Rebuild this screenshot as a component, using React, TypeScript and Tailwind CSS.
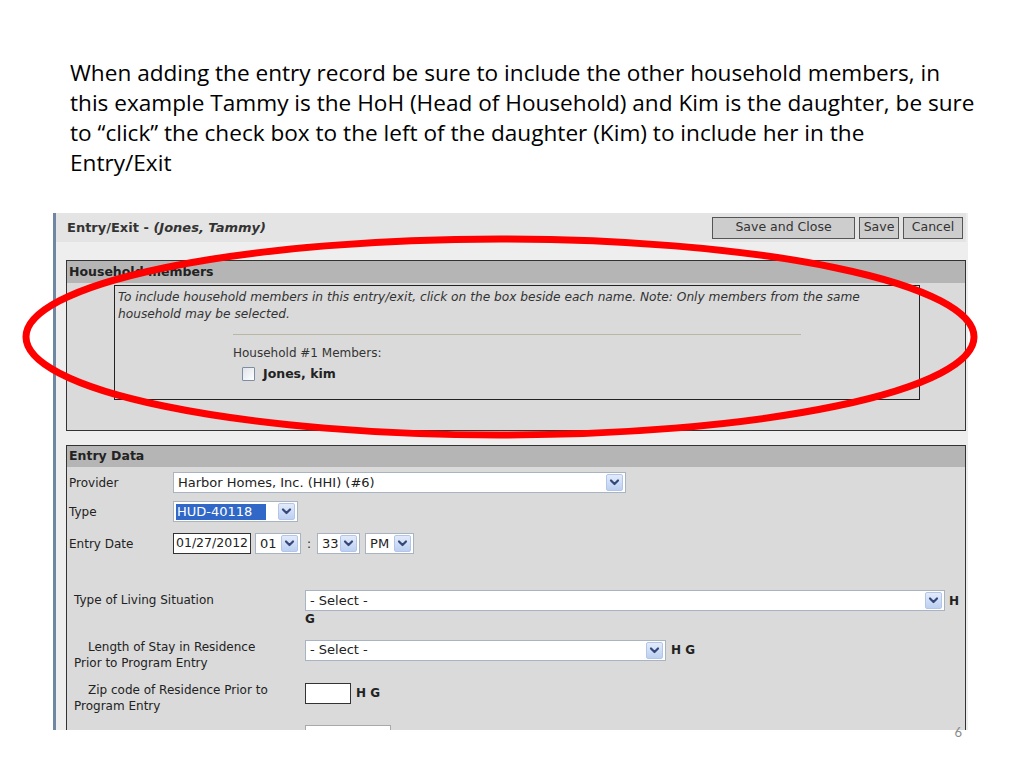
import React from 'react';

const ui = { fontFamily: '"DejaVu Sans", Verdana, sans-serif' };

const DropBtn = () => (
  <div className="flex h-[17px] w-[17px] shrink-0 items-center justify-center rounded-[2px] border border-[#b3c6ea] bg-gradient-to-b from-[#e3ebfa] to-[#bcd0f2]">
    <svg width="11" height="9" viewBox="0 0 11 9">
      <path d="M2 2.5 L5.5 6 L9 2.5" fill="none" stroke="#34487a" strokeWidth="2.2" strokeLinecap="round" strokeLinejoin="round" />
    </svg>
  </div>
);

const Select = ({ text, width, highlight }: { text: string; width: string; highlight?: boolean }) => (
  <div className={`flex h-[21px] items-center border border-[#a9b4c3] bg-white pl-[2px] pr-[2px] text-[13px] ${width}`}>
    <div className="min-w-0 flex-1 truncate">
      {highlight ? (
        <span className="inline-block bg-[#3168c8] px-[1px] pr-[14px] leading-[16px] text-white">{text}</span>
      ) : (
        <span className="pl-[2px] text-[#222]">{text}</span>
      )}
    </div>
    <DropBtn />
  </div>
);

const SectionHeader = ({ title, h }: { title: string; h: string }) => (
  <div className={`flex items-center bg-[#b5b5b5] pl-[2px] text-[12.5px] font-bold text-[#222] ${h}`}>{title}</div>
);

const App = () => {
  return (
    <div className="relative h-[768px] w-[1024px] overflow-hidden bg-white">
      {/* slide text */}
      <div
        className="w-[1010px] pl-[70px] pt-[58px] text-[22.6px] leading-[30px] text-black"
        style={{ fontFamily: '"Open Sans", Lato, sans-serif' }}
      >
        <p>When adding the entry record be sure to include the other household members, in</p>
        <p>this example Tammy is the HoH (Head of Household) and Kim is the daughter, be sure</p>
        <p>to “click” the check box to the left of the daughter (Kim) to include her in the</p>
        <p>Entry/Exit</p>
      </div>

      {/* screenshot panel */}
      <div
        className="ml-[53px] mt-[35px] h-[517px] w-[915px] overflow-hidden border-l-[3px] border-[#6f87a3] bg-[#eeeeee] pr-[2px] text-[12px] text-[#222]"
        style={ui}
      >
        <div className="flex h-[29px] items-center justify-between bg-[#e4e4e4] pl-[11px] pr-[3px]">
          <div className="text-[13px] font-bold text-[#333]">
            Entry/Exit - <span className="italic">(Jones, Tammy)</span>
          </div>
          <div className="flex items-center gap-[4px]">
            <button className="h-[22px] w-[143px] border border-[#555] bg-[#cdcdcd] text-[12.5px] text-[#333]">Save and Close</button>
            <button className="h-[22px] w-[40px] border border-[#555] bg-[#cdcdcd] text-[12.5px] text-[#333]">Save</button>
            <button className="h-[22px] w-[60px] border border-[#555] bg-[#cdcdcd] text-[12.5px] text-[#333]">Cancel</button>
          </div>
        </div>

        <div className="pl-[10px]">
          {/* Household members */}
          <div className="mt-[18px] h-[171px] border border-[#333] bg-[#dadada]">
            <SectionHeader title="Household members" h="h-[22px]" />
            <div className="ml-[47px] mt-[2px] h-[115px] w-[806px] border border-[#222]">
              <p className="pl-[3px] pt-[3px] text-[12.2px] italic leading-[17px] text-[#333]">
                To include household members in this entry/exit, click on the box beside each name. Note: Only members from the same household may be selected.
              </p>
              <div className="ml-[118px] mt-[11px] h-px w-[568px] bg-[#b7b7a4]" />
              <div className="ml-[118px] mt-[10px] leading-[17px] text-[#333]">Household #1 Members:</div>
              <div className="ml-[127px] mt-[3px] flex items-center gap-[8px]">
                <div className="h-[14px] w-[13px] rounded-[1px] border border-[#7d8ea3] bg-gradient-to-br from-[#dfe4ea] to-white" />
                <span className="text-[12.5px] font-bold">Jones, kim</span>
              </div>
            </div>
          </div>

          {/* Entry Data */}
          <div className="mt-[14px] h-[300px] border border-[#333] bg-[#dadada]">
            <SectionHeader title="Entry Data" h="h-[21px]" />
            <div className="mt-[5px] flex items-center">
              <div className="w-[106px] pl-[2px]">Provider</div>
              <Select text="Harbor Homes, Inc. (HHI) (#6)" width="w-[453px]" />
            </div>
            <div className="mt-[8px] flex items-center">
              <div className="w-[106px] pl-[2px]">Type</div>
              <Select text="HUD-40118" width="w-[125px]" highlight />
            </div>
            <div className="mt-[11px] flex items-center">
              <div className="w-[106px] pl-[2px]">Entry Date</div>
              <div className="flex h-[21px] w-[78px] items-center border border-[#333] bg-white pl-[2px] text-[12.5px]">01/27/2012</div>
              <div className="ml-[4px]">
                <Select text="01" width="w-[46px]" />
              </div>
              <span className="mx-[6px]">:</span>
              <Select text="33" width="w-[43px]" />
              <div className="ml-[5px]">
                <Select text="PM" width="w-[49px]" />
              </div>
            </div>

            <div className="mt-[36px] flex">
              <div className="w-[238px] pl-[7px] pt-[2px] leading-[16px]">Type of Living Situation</div>
              <div>
                <div className="flex items-center">
                  <Select text="- Select -" width="w-[640px]" />
                  <span className="ml-[4px] font-bold">H</span>
                </div>
                <div className="font-bold leading-[17px]">G</div>
              </div>
            </div>

            <div className="mt-[11px] flex">
              <div className="w-[238px] pl-[7px] leading-[16px]">
                <div className="indent-[14px]">Length of Stay in Residence</div>
                <div>Prior to Program Entry</div>
              </div>
              <div className="flex h-[22px] items-center">
                <Select text="- Select -" width="w-[361px]" />
                <span className="ml-[5px] font-bold">H G</span>
              </div>
            </div>

            <div className="mt-[11px] flex">
              <div className="w-[238px] pl-[7px] leading-[16px]">
                <div className="indent-[14px]">Zip code of Residence Prior to</div>
                <div>Program Entry</div>
              </div>
              <div className="flex h-[22px] items-center">
                <div className="h-[21px] w-[46px] border border-[#333] bg-white" />
                <span className="ml-[5px] font-bold">H G</span>
              </div>
            </div>

            <div className="mt-[11px] flex">
              <div className="w-[238px]" />
              <div className="h-[21px] w-[86px] border border-[#a9a9a9] bg-white" />
            </div>
          </div>
        </div>
      </div>

      {/* slide number */}
      <div
        className="absolute bottom-[26px] right-[62px] text-[13px] text-[#8a8a8a]"
        style={{ fontFamily: 'Lato, sans-serif' }}
      >
        6
      </div>

      {/* red annotation ellipse */}
      <svg className="pointer-events-none absolute left-0 top-0" width="1024" height="768">
        <ellipse cx="500" cy="337" rx="474" ry="98" fill="none" stroke="#ff0000" strokeWidth="7" />
      </svg>
    </div>
  );
};

export default App;
